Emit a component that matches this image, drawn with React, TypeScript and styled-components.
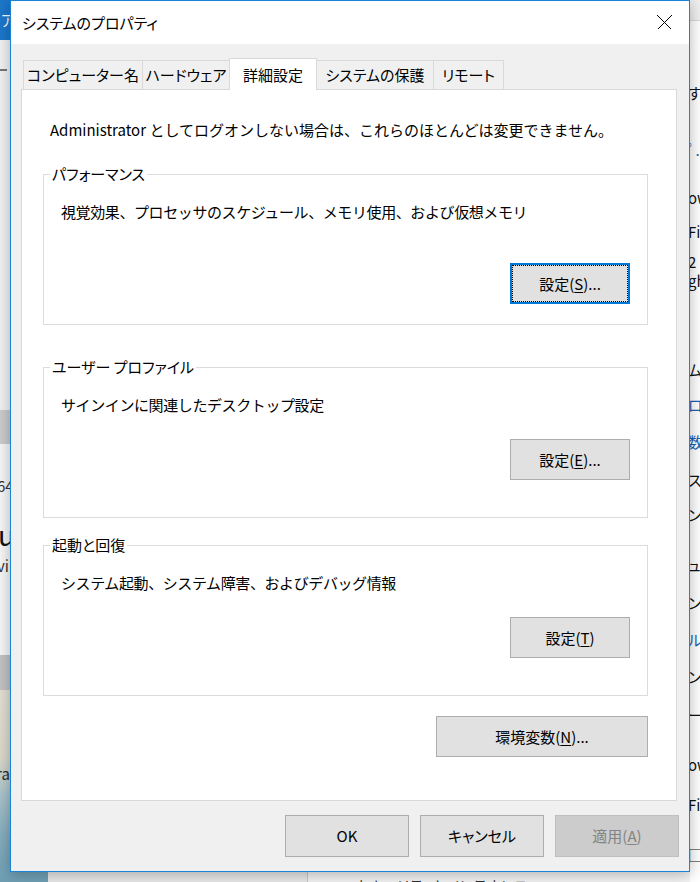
import React from "react";
import styled, { createGlobalStyle } from "styled-components";

const FONT = `"Noto Sans CJK JP", "Noto Sans", sans-serif`;

const GlobalStyle = createGlobalStyle`
  html, body {
    margin: 0;
    padding: 0;
    background: #f0f0f0;
  }
  * {
    box-sizing: border-box;
  }
`;

const tabs = [
  { label: "コンピューター名", width: 120 },
  { label: "ハードウェア", width: 88 },
  { label: "詳細設定", width: 88, active: true },
  { label: "システムの保護", width: 118 },
  { label: "リモート", width: 71 },
];

const groups = [
  {
    title: "パフォーマンス",
    text: "視覚効果、プロセッサのスケジュール、メモリ使用、および仮想メモリ",
    hotkey: "S",
    dots: "...",
    top: 25,
    btnTop: 41,
    focused: true,
  },
  {
    title: "ユーザー プロファイル",
    text: "サインインに関連したデスクトップ設定",
    hotkey: "E",
    dots: "...",
    top: 33,
    btnTop: 24,
  },
  {
    title: "起動と回復",
    text: "システム起動、システム障害、およびデバッグ情報",
    hotkey: "T",
    dots: "",
    top: 18,
    btnTop: 24,
  },
];

// fragments of the window behind the dialog, on the right edge
const rightBits = [
  { y: 93, t: "す" },
  { y: 150, t: "ﾟ.", blue: true },
  { y: 198, t: "ow" },
  { y: 232, t: "Fir" },
  { y: 262, t: " 2" },
  { y: 281, t: "gh" },
  { y: 370, t: "ム" },
  { y: 405, t: "ロ", blue: true },
  { y: 442, t: "数", blue: true },
  { y: 480, t: "ス" },
  { y: 515, t: "ン" },
  { y: 565, t: "ュー" },
  { y: 603, t: "ン" },
  { y: 640, t: "ル", blue: true },
  { y: 677, t: "ン" },
  { y: 715, t: "ー" },
  { y: 765, t: "ow" },
  { y: 805, t: "Fir" },
  { y: 855, t: "□" },
];

const App = () => {
  return (
    <>
      <GlobalStyle />
      <Desktop>
        <LeftWindow>
          <LeftTitle>ア</LeftTitle>
          <LeftPane $h={370} $bg="#f3f3f3">
            <Dash />
          </LeftPane>
          <LeftPane $h={34} $bg="#cdcdcd" />
          <LeftPane $h={211} $bg="#f8f8f8">
            <SmallText $top={32}>64</SmallText>
            <BigText>u</BigText>
            <SmallText $top={4}>vi</SmallText>
          </LeftPane>
          <LeftPane $h={35} $bg="#c3c3c3" />
          <Photo>
            <PhotoText>ra</PhotoText>
          </Photo>
        </LeftWindow>

        <BottomWindow>
          <BottomSide />
          <BottomMain>セキュリティとメンテナンス</BottomMain>
        </BottomWindow>

        <RightWindow>
          <RightHeader />
          <RightSpacer $h={rightBits[0].y - 9 - 21} />
          {rightBits.map((b, i) => (
            <RightRow
              key={i}
              $h={i < rightBits.length - 1 ? rightBits[i + 1].y - b.y : 30}
              $blue={!!b.blue}
            >
              {b.t}
            </RightRow>
          ))}
        </RightWindow>

        <Dialog>
          <TitleBar>
            <Title>システムのプロパティ</Title>
            <CloseButton>
              <svg width="15" height="15" viewBox="0 0 15 15">
                <path d="M0.5 0.5 L14.5 14.5 M14.5 0.5 L0.5 14.5" stroke="#000" strokeWidth="1" fill="none" />
              </svg>
            </CloseButton>
          </TitleBar>

          <Body>
            <TabStrip>
              {tabs.map((t) => (
                <Tab key={t.label} $w={t.width} $active={!!t.active}>
                  {t.label}
                </Tab>
              ))}
            </TabStrip>

            <Panel>
              <Notice>
                Administrator としてログオンしない場合は、これらのほとんどは変更できません。
              </Notice>

              {groups.map((g) => (
                <Group key={g.title} $top={g.top}>
                  <GroupLabel>{g.title}</GroupLabel>
                  <GroupBody>
                    <Desc>{g.text}</Desc>
                    <ButtonRow $top={g.btnTop}>
                      <Button $w={120} $h={41} $focused={!!g.focused}>
                        設定(<u>{g.hotkey}</u>){g.dots}
                      </Button>
                    </ButtonRow>
                  </GroupBody>
                </Group>
              ))}

              <ButtonRow $top={20}>
                <Button $w={212} $h={41}>
                  環境変数(<u>N</u>)...
                </Button>
              </ButtonRow>
            </Panel>

            <Footer>
              <Button $w={124} $h={42}>OK</Button>
              <Button $w={124} $h={42}>キャンセル</Button>
              <Button $w={124} $h={42} $disabled>
                適用(<u>A</u>)
              </Button>
            </Footer>
          </Body>
        </Dialog>
      </Desktop>
    </>
  );
};

export default App;

const Desktop = styled.div`
  position: relative;
  width: 700px;
  height: 882px;
  overflow: hidden;
  padding-left: 10px;
  background: #f0f0f0;
  font-family: ${FONT};
  font-feature-settings: "palt";
  color: #000;
`;

const LeftWindow = styled.div`
  position: absolute;
  left: 0;
  top: 0;
  width: 48px;
  height: 882px;
  display: flex;
  flex-direction: column;
  overflow: hidden;
`;

const LeftTitle = styled.div`
  height: 40px;
  flex: none;
  background: #1c78cc;
  color: #fff;
  font-size: 15px;
  line-height: 40px;
  padding-left: 1px;
  white-space: nowrap;
`;

const LeftPane = styled.div<{ $h: number; $bg: string }>`
  height: ${(p) => p.$h}px;
  flex: none;
  background: ${(p) => p.$bg};
  overflow: hidden;
`;

const Dash = styled.div`
  width: 7px;
  height: 2px;
  margin-top: 29px;
  background: #777;
`;

const SmallText = styled.div<{ $top: number }>`
  margin-top: ${(p) => p.$top}px;
  margin-left: -3px;
  font-size: 15px;
  line-height: 20px;
  color: #333;
  white-space: nowrap;
`;

const BigText = styled.div`
  margin-top: 20px;
  margin-left: -2px;
  font-size: 28px;
  line-height: 36px;
  color: #111;
`;

const Photo = styled.div`
  flex: 1;
  background: linear-gradient(
    180deg,
    #e4e0d3 0%,
    #dcdacd 35%,
    #a9c3cc 55%,
    #86aebf 75%,
    #6f9fb5 100%
  );
`;

const PhotoText = styled.div`
  margin-top: 74px;
  margin-left: -4px;
  font-size: 15px;
  line-height: 20px;
  color: #2a2a2a;
`;

const BottomWindow = styled.div`
  position: absolute;
  left: 48px;
  top: 860px;
  width: 652px;
  height: 22px;
  display: flex;
`;

const BottomSide = styled.div`
  width: 260px;
  background: #e9e9e9;
  border-right: 1px solid #c8c8c8;
`;

const BottomMain = styled.div`
  flex: 1;
  background: #f4f4f4;
  padding: 16px 0 0 48px;
  font-size: 15px;
  line-height: 20px;
  color: #333;
  white-space: nowrap;
  overflow: hidden;
`;

const RightWindow = styled.div`
  position: absolute;
  left: 690px;
  top: 0;
  width: 40px;
  height: 882px;
  background: #fff;
  display: flex;
  flex-direction: column;
  overflow: hidden;
`;

const RightHeader = styled.div`
  height: 21px;
  flex: none;
  background: #f0f0f0;
  border-bottom: 1px solid #d8d8d8;
`;

const RightSpacer = styled.div<{ $h: number }>`
  height: ${(p) => p.$h}px;
  flex: none;
`;

const RightRow = styled.div<{ $h: number; $blue: boolean }>`
  height: ${(p) => p.$h}px;
  flex: none;
  margin-left: -2px;
  font-size: 15px;
  line-height: 18px;
  color: ${(p) => (p.$blue ? "#1a5fb4" : "#111")};
  white-space: nowrap;
  overflow: hidden;
`;

const Dialog = styled.div`
  position: relative;
  z-index: 2;
  width: 680px;
  height: 872px;
  border: 1px solid #1883d7;
  background: #f0f0f0;
  display: flex;
  flex-direction: column;
  box-shadow: 0 2px 14px rgba(0, 0, 0, 0.3);
`;

const TitleBar = styled.div`
  height: 43px;
  flex: none;
  background: #fff;
  display: flex;
  align-items: center;
  justify-content: space-between;
  padding-left: 11px;
`;

const Title = styled.div`
  font-size: 15px;
  line-height: 20px;
  margin-top: 1px;
`;

const CloseButton = styled.div`
  width: 48px;
  height: 43px;
  display: flex;
  align-items: center;
  justify-content: center;
  margin-right: 1px;

  svg {
    display: block;
    shape-rendering: crispEdges;
  }
`;

const Body = styled.div`
  flex: 1;
  display: flex;
  flex-direction: column;
  padding: 14px 12px 0 10px;
`;

const TabStrip = styled.div`
  height: 31px;
  flex: none;
  display: flex;
  align-items: flex-end;
  padding-left: 2px;
  position: relative;
  z-index: 1;
`;

const Tab = styled.div<{ $w: number; $active: boolean }>`
  width: ${(p) => p.$w}px;
  height: ${(p) => (p.$active ? 32 : 29)}px;
  margin-bottom: ${(p) => (p.$active ? -1 : 0)}px;
  margin-left: -1px;
  border: 1px solid #d9d9d9;
  border-bottom: none;
  background: ${(p) => (p.$active ? "#fff" : "#f0f0f0")};
  position: relative;
  z-index: ${(p) => (p.$active ? 2 : 1)};
  display: flex;
  align-items: center;
  justify-content: center;
  font-size: 15px;
  line-height: 20px;
  white-space: nowrap;

  &:first-child {
    margin-left: 0;
  }
`;

const Panel = styled.div`
  height: 712px;
  flex: none;
  background: #fff;
  border: 1px solid #d9d9d9;
  display: flex;
  flex-direction: column;
  padding: 0 28px 0 21px;
`;

const Notice = styled.div`
  margin: 30px 0 0 7px;
  font-size: 15px;
  line-height: 20px;
  white-space: nowrap;
  font-feature-settings: normal;
`;

const Group = styled.fieldset<{ $top: number }>`
  margin: ${(p) => p.$top}px 0 0 0;
  padding: 0;
  min-width: 0;
  border: 1px solid #dcdcdc;
`;

const GroupLabel = styled.legend`
  margin-left: 6px;
  padding: 0 2px;
  font-size: 15px;
  line-height: 18px;
`;

const GroupBody = styled.div`
  height: 141px;
  padding: 19px 17px 0 17px;
`;

const Desc = styled.div`
  font-size: 15px;
  line-height: 20px;
  white-space: nowrap;
  font-feature-settings: normal;
  letter-spacing: -0.4px;
`;

const ButtonRow = styled.div<{ $top: number }>`
  display: flex;
  justify-content: flex-end;
  margin-top: ${(p) => p.$top}px;
`;

const Button = styled.div<{
  $w: number;
  $h: number;
  $focused?: boolean;
  $disabled?: boolean;
}>`
  width: ${(p) => p.$w}px;
  height: ${(p) => p.$h}px;
  display: flex;
  align-items: center;
  justify-content: center;
  font-size: 15px;
  line-height: 20px;
  white-space: nowrap;
  background: ${(p) => (p.$disabled ? "#cccccc" : "#e1e1e1")};
  color: ${(p) => (p.$disabled ? "#838383" : "#000")};
  border: ${(p) =>
    p.$focused
      ? "2px solid #0078d7"
      : p.$disabled
      ? "1px solid #bfbfbf"
      : "1px solid #adadad"};
  outline: ${(p) => (p.$focused ? "1px dotted #000" : "none")};
  outline-offset: -3px;

  u {
    text-decoration-thickness: 1px;
    text-underline-offset: 2px;
  }
`;

const Footer = styled.div`
  display: flex;
  justify-content: flex-end;
  gap: 11px;
  margin: 14px -2px 0 0;
`;
